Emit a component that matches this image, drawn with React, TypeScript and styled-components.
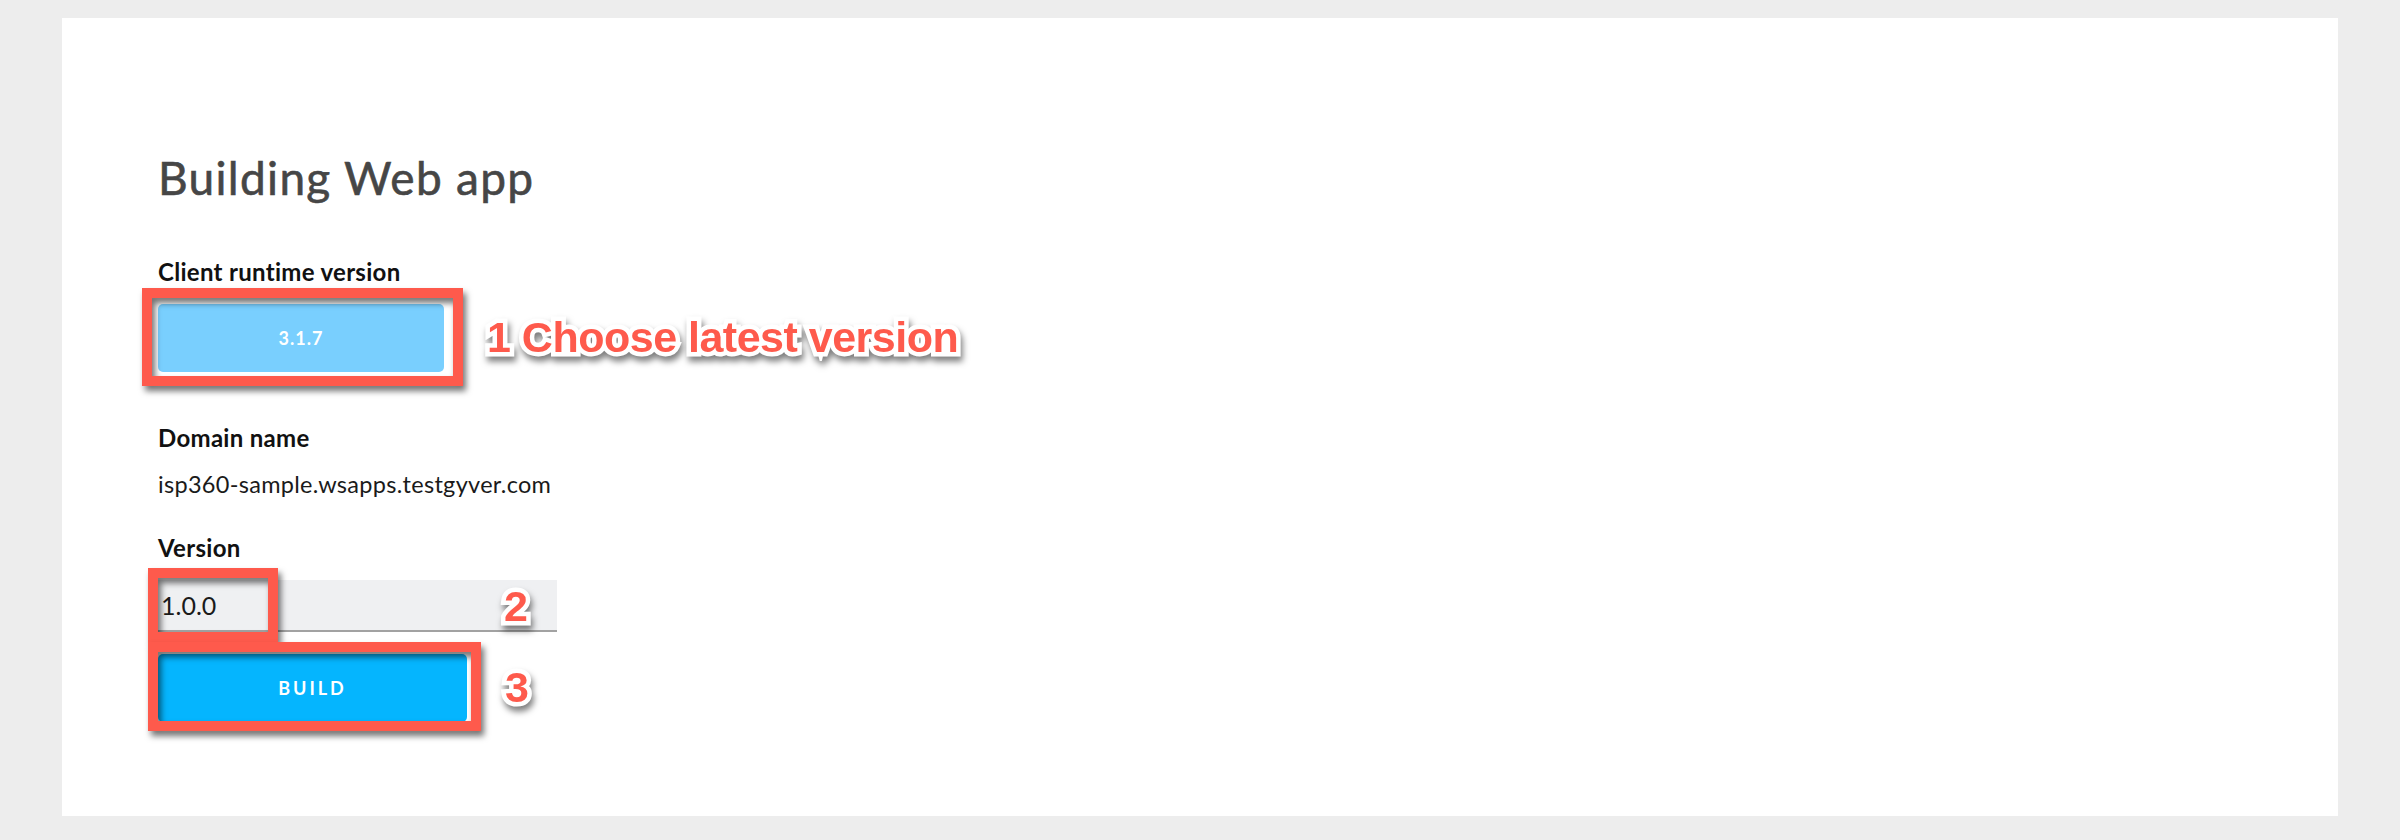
import React from 'react';
import styled, { createGlobalStyle } from 'styled-components';

const GlobalStyle = createGlobalStyle`
  html, body {
    margin: 0;
    padding: 0;
    background: #ededed;
  }
  body {
    font-family: Lato, 'Open Sans', sans-serif;
    -webkit-font-smoothing: antialiased;
  }
`;

const annotationRed = '#fe5a4c';

const Page = styled.div`
  padding: 18px 62px 24px;
`;

const Panel = styled.section`
  box-sizing: border-box;
  height: 798px;
  background: #fff;
  padding: 132px 0 0 96px;
`;

const Title = styled.h1`
  margin: 0 0 53px;
  font-size: 46px;
  line-height: 1.2;
  font-weight: 400;
  letter-spacing: 1.3px;
  color: #464646;
  -webkit-text-stroke: 0.6px #464646;
`;

const Field = styled.div<{ $gap: number }>`
  margin-bottom: ${p => p.$gap}px;
`;

const Label = styled.div`
  font-size: 24px;
  line-height: 1.2;
  font-weight: 700;
  letter-spacing: 0.3px;
  color: #111;
  margin-bottom: 17px;
`;

const Value = styled.div`
  font-size: 23.5px;
  line-height: 1.2;
  letter-spacing: 0.3px;
  color: #1a1a1a;
`;

// a control with its callout text beside it
const ControlRow = styled.div<{ $gap: number }>`
  display: flex;
  align-items: center;
  gap: ${p => p.$gap}px;
`;

const Highlight = styled.div`
  position: relative;
  width: fit-content;
`;

// red annotation rectangle drawn over a control
const Frame = styled.div<{ $t: number; $r: number; $b: number; $l: number }>`
  position: absolute;
  top: ${p => -p.$t}px;
  right: ${p => -p.$r}px;
  bottom: ${p => -p.$b}px;
  left: ${p => -p.$l}px;
  border: 10px solid ${annotationRed};
  pointer-events: none;
  filter: drop-shadow(3px 5px 3px rgba(0, 0, 0, 0.55));
`;

const Callout = styled.span`
  white-space: nowrap;
  font-family: 'Liberation Sans', Arial, sans-serif;
  font-weight: 700;
  font-size: 43px;
  line-height: 1;
  letter-spacing: -0.5px;
  color: ${annotationRed};
  -webkit-text-stroke: 9px #fff;
  paint-order: stroke fill;
  filter: drop-shadow(2px 5px 3px rgba(0, 0, 0, 0.5));
  pointer-events: none;
`;

const FloatingCallout = styled(Callout)`
  position: absolute;
  top: 5px;
  left: 346px;
`;

const Button = styled.button<{ $tone: 'light' | 'strong'; $width: number }>`
  display: flex;
  align-items: center;
  justify-content: center;
  width: ${p => p.$width}px;
  height: 68px;
  border: 0;
  border-radius: 5px;
  padding: 0;
  background: ${p => (p.$tone === 'light' ? '#79cffe' : '#05b5fe')};
  color: #fff;
  font-family: Lato, sans-serif;
  font-size: 18px;
  font-weight: 700;
  letter-spacing: ${p => (p.$tone === 'light' ? 1 : 3)}px;
  cursor: pointer;
`;

const InputSlot = styled.div`
  position: relative;
  width: fit-content;
  margin-bottom: 22px;
`;

const VersionInput = styled.input`
  box-sizing: border-box;
  display: block;
  width: 399px;
  height: 52px;
  padding: 0 0 0 3px;
  border: 0;
  border-bottom: 2px solid #a2a2a2;
  background: #eff0f2;
  font-family: Lato, sans-serif;
  font-size: 25px;
  color: #1a1a1a;
  outline: none;
`;

export default function App() {
  return (
    <>
      <GlobalStyle />
      <Page>
        <Panel>
          <Title>Building Web app</Title>

          <Field $gap={52}>
            <Label>Client runtime version</Label>
            <ControlRow $gap={43}>
              <Highlight>
                <Button $tone="light" $width={286}>3.1.7</Button>
                <Frame $t={16} $r={19} $b={14} $l={16} />
              </Highlight>
              <Callout>1 Choose latest version</Callout>
            </ControlRow>
          </Field>

          <Field $gap={36}>
            <Label>Domain name</Label>
            <Value>isp360-sample.wsapps.testgyver.com</Value>
          </Field>

          <Field $gap={0}>
            <Label>Version</Label>
            <InputSlot>
              <VersionInput defaultValue="1.0.0" />
              <Frame $t={12} $r={-279} $b={10} $l={10} />
              <FloatingCallout>2</FloatingCallout>
            </InputSlot>
            <ControlRow $gap={38}>
              <Highlight>
                <Button $tone="strong" $width={309}>BUILD</Button>
                <Frame $t={12} $r={14} $b={9} $l={10} />
              </Highlight>
              <Callout>3</Callout>
            </ControlRow>
          </Field>
        </Panel>
      </Page>
    </>
  );
}
